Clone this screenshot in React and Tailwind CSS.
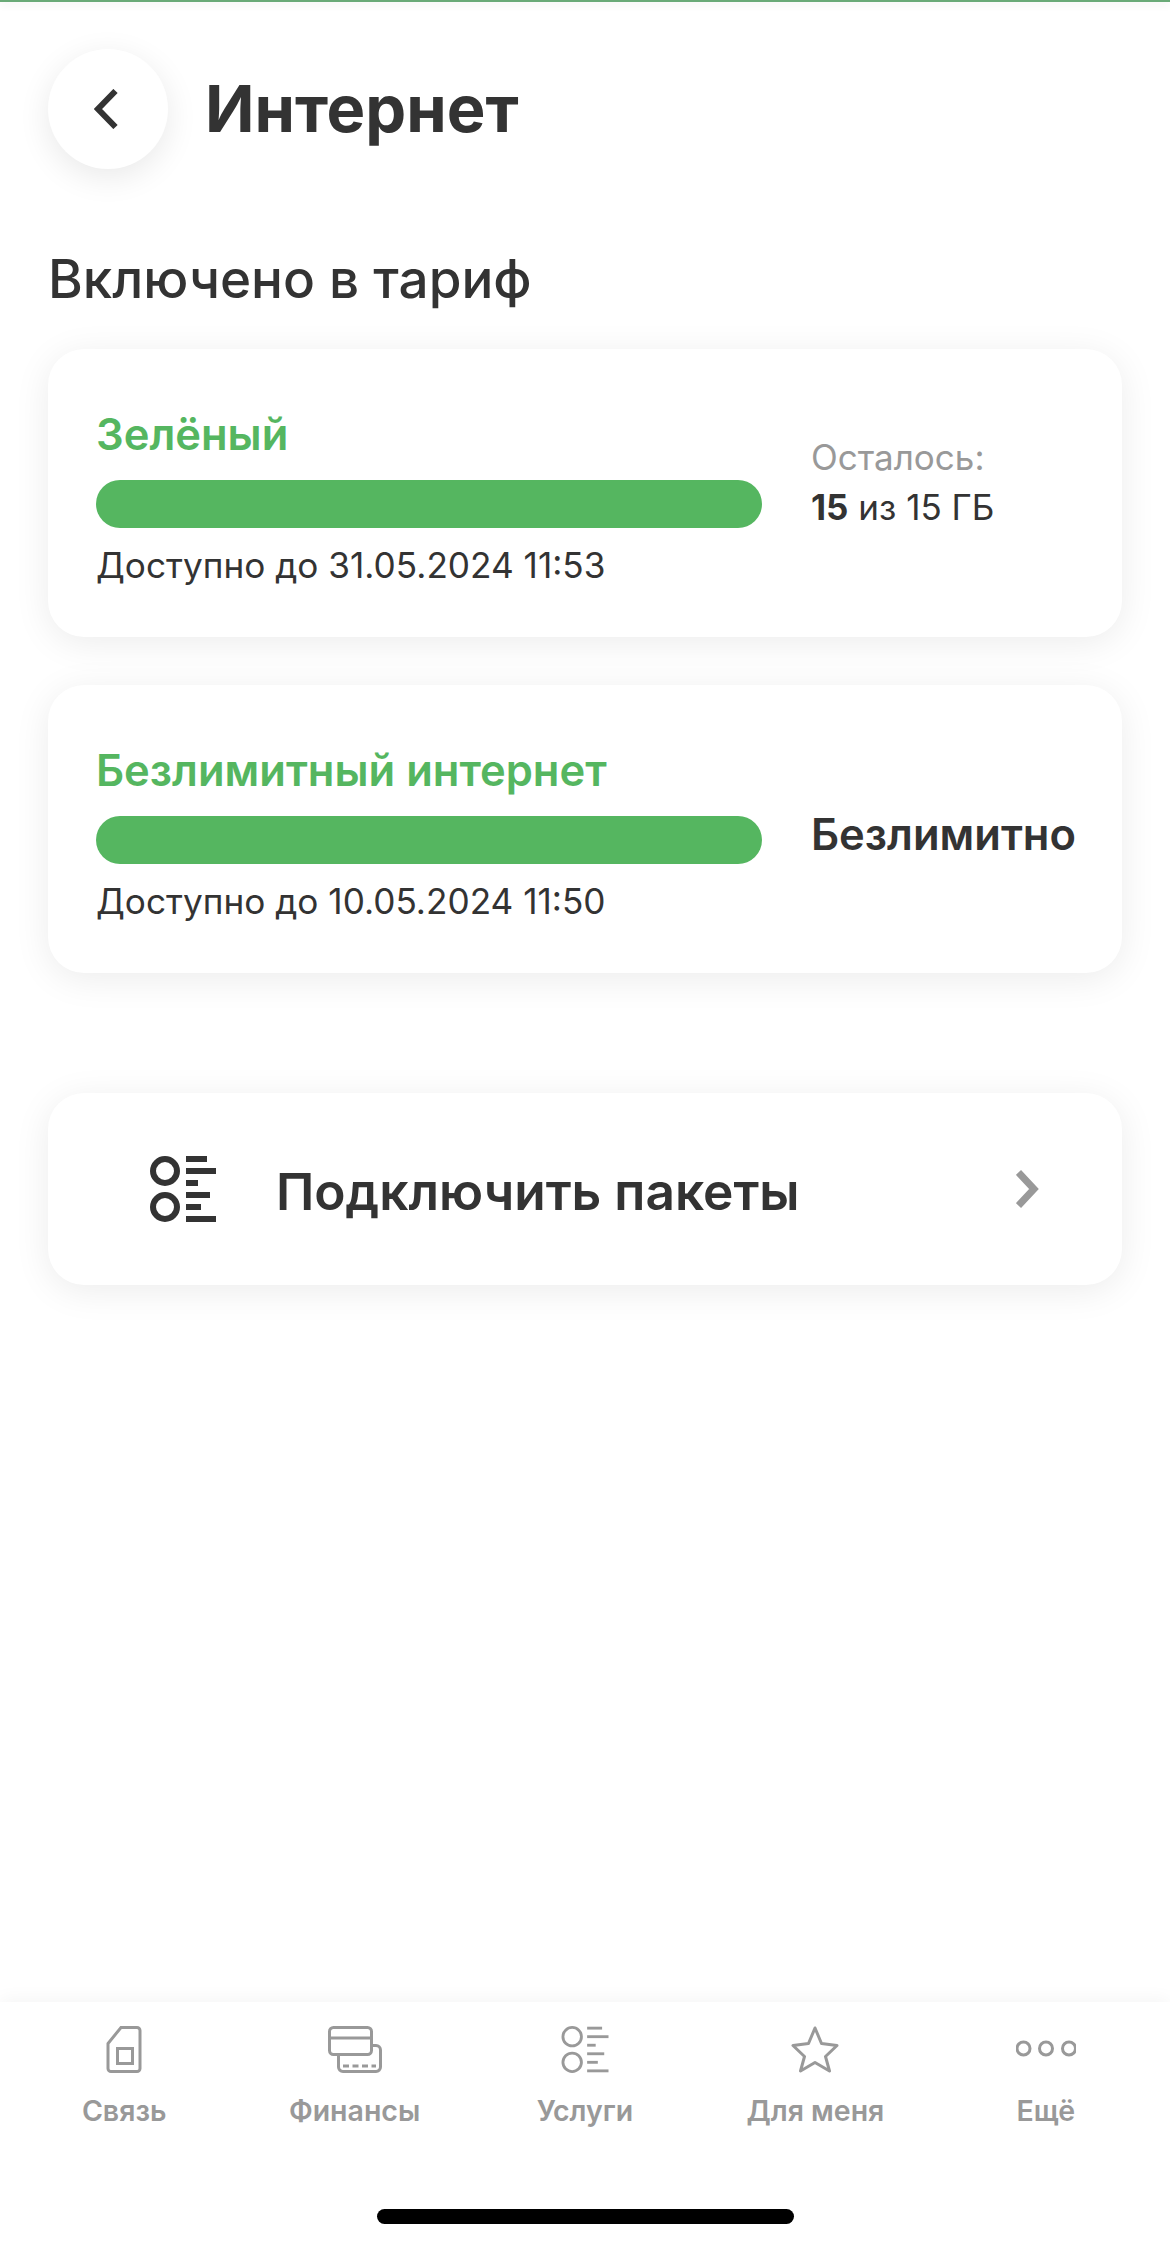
import React from "react";

const font = { fontFamily: "Inter, 'Noto Sans', sans-serif" };

const ListIcon = ({ className, ring, bar, color }) => {
    // размеры полосок в координатах viewBox 66x66
    const bars = [
        [0, 21], [12, 30], [24, 12], [36, 24], [48, 15], [60, 30],
    ];
    return (
        <svg className={className} viewBox="0 0 66 66" fill="none">
            <circle cx="15" cy="15" r={15 - ring / 2} stroke={color} strokeWidth={ring} />
            <circle cx="15" cy="51" r={15 - ring / 2} stroke={color} strokeWidth={ring} />
            {bars.map(([y, w]) => (
                <rect key={y} x="36" y={y + (6 - bar) / 2} width={w} height={bar} fill={color} />
            ))}
        </svg>
    );
};

const SimIcon = () => (
    <svg className="w-[36px] h-[47px]" viewBox="0 0 36 47" fill="none" stroke="#999" strokeWidth="3">
        <path d="M15 1.500H31a3 3 0 0 1 3 3V42.500a3 3 0 0 1-3 3H5a3 3 0 0 1-3-3V17.500Z" />
        <rect x="11.500" y="22.500" width="15" height="15" />
    </svg>
);

const FinanceIcon = () => (
    <svg className="w-[54px] h-[47px]" viewBox="0 0 54 47" fill="none" stroke="#999" strokeWidth="3">
        <rect x="1.500" y="1.500" width="42" height="27" rx="4" />
        <path d="M1.500 12H43.500" />
        <path d="M43.500 19.500H48a4.500 4.500 0 0 1 4.500 4.500V41a4.500 4.500 0 0 1-4.500 4.500H15a4.500 4.500 0 0 1-4.500-4.500V28.500" />
        <path d="M15 40H48" strokeDasharray="6 3.500" />
    </svg>
);

const StarIcon = () => (
    <svg className="w-[48px] h-[47px]" viewBox="0 0 48 47" fill="none" stroke="#999" strokeWidth="3" strokeLinejoin="round">
        <path d="M24 2L30.500 17.500L46 19.500L34.500 30.500L38.500 45L24 36.500L9.500 45L13.500 30.500L2 19.500L17.500 17.500Z" />
    </svg>
);

const DotsIcon = () => (
    <svg className="w-[60px] h-[47px]" viewBox="0 0 60 47" fill="none" stroke="#999" strokeWidth="3">
        <circle cx="7.500" cy="22.500" r="6.500" />
        <circle cx="30" cy="22.500" r="6.500" />
        <circle cx="53" cy="22.500" r="6.500" />
    </svg>
);

const tabs = [
    { label: "Связь", icon: <SimIcon /> },
    { label: "Финансы", icon: <FinanceIcon /> },
    { label: "Услуги", icon: <ListIcon className="w-[48px] h-[47px]" ring={4} bar={4} color="#999" /> },
    { label: "Для меня", icon: <StarIcon /> },
    { label: "Ещё", icon: <DotsIcon /> },
];

const packages = [
    { title: "Зелёный", until: "Доступно до 31.05.2024 11:53", limited: true },
    { title: "Безлимитный интернет", until: "Доступно до 10.05.2024 11:50", limited: false },
];

const App = () => {
    return (
        <div className="w-[1170px] h-[2248px] bg-white flex flex-col overflow-hidden" style={font}>
            <div className="h-[2px] bg-[#6aaa78] shadow-[0_2px_8px_rgba(0,0,0,0.12)]" />

            {/* Шапка */}
            <div className="flex items-center pl-[48px] pt-[47px]">
                <button className="w-[120px] h-[120px] rounded-full bg-white flex items-center justify-center shadow-[0_8px_32px_rgba(0,0,0,0.09)]">
                    <svg className="w-[24px] h-[40px] -ml-[4px]" viewBox="0 0 24 40" fill="none" stroke="#333" strokeWidth="6">
                        <path d="M21.500 2L4 20L21.500 38" />
                    </svg>
                </button>
                <h1 className="ml-[37px] text-[65px] leading-[78px] font-bold text-[#333]">Интернет</h1>
            </div>

            <main className="flex-1 px-[48px]">
                <h2 className="mt-[78px] text-[53px] leading-[64px] font-medium text-[#333]">Включено в тариф</h2>

                <div className="mt-[38px] flex flex-col gap-[48px]">
                    {packages.map((p) => (
                        <div key={p.title} className="h-[288px] rounded-[36px] bg-white flex items-center pl-[48px] shadow-[0_6px_36px_rgba(0,0,0,0.08)]">
                            <div className="w-[666px] pt-[10px]">
                                <div className="text-[43.500px] leading-[52px] font-semibold text-[#55b660]">{p.title}</div>
                                <div className="mt-[20px] h-[48px] rounded-full bg-[#55b660]" />
                                <div className="mt-[14px] text-[35.200px] leading-[46px] text-[#333]">{p.until}</div>
                            </div>
                            <div className="ml-[49px]">
                                {p.limited ? (
                                    <div className="pb-[22px]">
                                        <div className="text-[35px] leading-[50px] text-[#999]">Осталось:</div>
                                        <div className="text-[35px] leading-[50px] text-[#333]">
                                            <span className="font-bold">15</span> из 15 ГБ
                                        </div>
                                    </div>
                                ) : (
                                    <div className="pt-[10px] text-[43.500px] leading-[52px] font-semibold text-[#333]">Безлимитно</div>
                                )}
                            </div>
                        </div>
                    ))}
                </div>

                <div className="mt-[120px] h-[192px] rounded-[36px] bg-white flex items-center pl-[102px] pr-[83px] shadow-[0_6px_36px_rgba(0,0,0,0.08)]">
                    <ListIcon className="w-[66px] h-[66px]" ring={6} bar={6} color="#333" />
                    <span className="ml-[60px] pt-[4px] flex-1 text-[51.400px] leading-[64px] font-semibold text-[#333]">Подключить пакеты</span>
                    <svg className="w-[23px] h-[38px]" viewBox="0 0 23 38" fill="none" stroke="#999" strokeWidth="7">
                        <path d="M2.500 2.500L18 19L2.500 35.500" />
                    </svg>
                </div>
            </main>

            {/* Нижнее меню */}
            <nav className="h-[246px] bg-white shadow-[0_-4px_16px_rgba(0,0,0,0.04)] px-[9px] pt-[24px] relative">
                <div className="grid grid-cols-5">
                    {tabs.map((t) => (
                        <div key={t.label} className="flex flex-col items-center">
                            <div className="h-[47px] flex items-center justify-center">{t.icon}</div>
                            <span className="mt-[20px] text-[28.500px] leading-[36px] font-semibold text-[#999]">{t.label}</span>
                        </div>
                    ))}
                </div>
                <div className="mt-[80px] mx-auto w-[417px] h-[15px] rounded-full bg-black" />
            </nav>
        </div>
    );
};

export default App;
